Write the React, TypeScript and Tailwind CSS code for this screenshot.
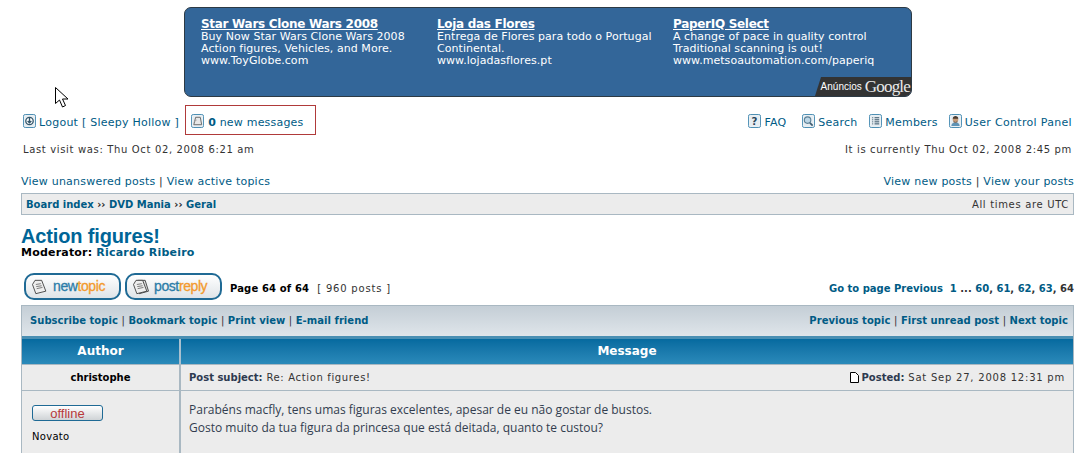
const font = "font-['DejaVu_Sans',Verdana,sans-serif]";

function IconFrame({ children }: { children: React.ReactNode }) {
  return (
    <svg width="13" height="14" viewBox="0 0 14 15" className="shrink-0">
      <rect x="0.5" y="0.5" width="13" height="14" rx="2" fill="#cfdde6" stroke="#3a84ad" />
      <rect x="1.5" y="1.5" width="11" height="12" rx="1" fill="#e6edf2" stroke="#ffffff" strokeWidth="0.5" />
      {children}
    </svg>
  );
}

function LogoutIcon() {
  return (
    <IconFrame>
      <circle cx="7" cy="7.5" r="4" fill="#fff" stroke="#33566b" strokeWidth="1.4" />
      <path d="M7 4v5M5 7.5l2 2 2-2" fill="none" stroke="#33566b" strokeWidth="1.4" />
    </IconFrame>
  );
}

function MessageIcon() {
  return (
    <IconFrame>
      <path d="M5 3.500h5l1.500 8H3z" fill="#e8e8e8" stroke="#666" />
      <path d="M3 8.500l3-2" stroke="#999" />
    </IconFrame>
  );
}

function FaqIcon() {
  return (
    <IconFrame>
      <text x="7" y="11.500" textAnchor="middle" fontSize="11" fontWeight="700" fontFamily="'DejaVu Sans'" fill="#27465a">?</text>
    </IconFrame>
  );
}

function SearchIcon() {
  return (
    <IconFrame>
      <circle cx="6" cy="6.500" r="3.500" fill="#bcd6e6" stroke="#5b7f95" strokeWidth="1.2" />
      <path d="M8.500 9.500l3 3" stroke="#3f5d70" strokeWidth="1.800" />
    </IconFrame>
  );
}

function MembersIcon() {
  return (
    <IconFrame>
      <path d="M3.500 4h1M6 4h5M3.500 6.200h1M6 6.200h5M3.500 8.400h1M6 8.400h5M3.500 10.600h1M6 10.600h5" stroke="#27465a" />
    </IconFrame>
  );
}

function UcpIcon() {
  return (
    <IconFrame>
      <path d="M2.500 13c0-3 2-4 4.500-4s4.500 1 4.500 4z" fill="#5f93b5" />
      <circle cx="7" cy="6" r="3" fill="#c49a78" />
      <path d="M4 5c0-2 1.500-3 3-3s3 1 3 3z" fill="#4a3a2e" />
      <path d="M5 7.500c1 1.500 3 1.500 4 0v1.500H5z" fill="#4a3a2e" />
    </IconFrame>
  );
}

function NavLink({ icon, label, className }: { icon: React.ReactNode; label: React.ReactNode; className?: string }) {
  return (
    <span className={`mt-[6px] flex items-start gap-[3px] leading-[14px] ${className ?? ""}`}>
      <span className="-mt-[2px]">{icon}</span>
      <span>{label}</span>
    </span>
  );
}

function DocIcon({ double }: { double?: boolean }) {
  return (
    <svg width="20" height="20" viewBox="0 0 24 22" className="shrink-0">
      {double && <path d="M8 3h9l4 13-11 3z" fill="#ddd" stroke="#333" />}
      <path d="M6 3h8l5 13-12 3L3 8z" fill="#eee" stroke="#333" />
      <path d="M7 8l6-1M7.500 10.500l6.500-1M8 13l7-1.500" stroke="#666" />
    </svg>
  );
}

function PostButton({ first, second, double, width }: { first: string; second: string; double?: boolean; width: string }) {
  return (
    <div className={`${width} flex h-[27px] items-center gap-[3px] rounded-[10px] border-2 border-[#1f6a95] bg-gradient-to-b from-white to-[#dfe4e8] pl-[4px]`}>
      <DocIcon double={double} />
      <span className="font-['Liberation_Sans',Arial,sans-serif] text-[14px] tracking-[-0.4px] [-webkit-text-stroke:0.3px]">
        <span className="text-[#2b7ca8]">{first}</span>
        <span className="text-[#f39a2d]">{second}</span>
      </span>
    </div>
  );
}

function AdColumn({ title, lines }: { title: string; lines: string[] }) {
  return (
    <div className="w-[236px] text-[11px] leading-[12px] tracking-[0.05px] text-white">
      <div className="text-[12px] leading-[13px] font-bold tracking-[-0.3px] underline">{title}</div>
      {lines.map((line) => (
        <div key={line}>{line}</div>
      ))}
    </div>
  );
}

export default function App() {
  return (
    <div className={`${font} relative h-[453px] w-[1089px] overflow-hidden bg-white text-[11px] text-[#005b85]`}>
      {/* ad banner */}
      <div className="relative mt-[7px] ml-[184px] flex h-[90px] w-[728px] rounded-[7px] border border-[#2d3a44] bg-[#336699] pt-[10px] pl-[16px]">
        <AdColumn
          title="Star Wars Clone Wars 2008"
          lines={["Buy Now Star Wars Clone Wars 2008", "Action figures, Vehicles, and More.", "www.ToyGlobe.com"]}
        />
        <AdColumn
          title="Loja das Flores"
          lines={["Entrega de Flores para todo o Portugal", "Continental.", "www.lojadasflores.pt"]}
        />
        <AdColumn
          title="PaperIQ Select"
          lines={["A change of pace in quality control", "Traditional scanning is out!", "www.metsoautomation.com/paperiq"]}
        />
        <div className="absolute right-0 bottom-0 flex h-[19px] w-[96px] items-center justify-end gap-[3px] rounded-br-[6px] bg-[#333333] pr-[1px] [clip-path:polygon(6px_0,100%_0,100%_100%,0_100%)]">
          <span className="font-['Liberation_Sans',Arial,sans-serif] text-[10px] text-white">Anúncios</span>
          <span className="font-['Liberation_Serif',serif] text-[17px] leading-[16px] tracking-[-0.8px] text-[#e8e8e8]">Google</span>
        </div>
      </div>

      {/* top nav */}
      <div className="mt-[8px] mr-[17px] ml-[23px] flex h-[30px] items-center justify-between tracking-[0.2px]">
        <div className="flex items-center">
          <NavLink icon={<LogoutIcon />} label="Logout [ Sleepy Hollow ]" className="tracking-[0.25px]" />
          <div className="ml-[6px] flex h-[30px] w-[131px] items-center border border-[#b03a3a] pl-[5px]">
            <NavLink
              icon={<MessageIcon />}
              label={
                <span className="ml-[1px]">
                  <b>0</b> new messages
                </span>
              }
            />
          </div>
        </div>
        <div className="flex items-center">
          <NavLink icon={<FaqIcon />} label="FAQ" className="mr-[16px]" />
          <NavLink icon={<SearchIcon />} label="Search" className="mr-[12px]" />
          <NavLink icon={<MembersIcon />} label="Members" className="mr-[11px]" />
          <NavLink icon={<UcpIcon />} label="User Control Panel" className="tracking-[0.32px]" />
        </div>
      </div>

      {/* visit times */}
      <div className="mt-[8px] mr-[17px] ml-[23px] flex justify-between text-[10px] leading-[14px] tracking-[0.65px] text-[#333333]">
        <span>Last visit was: Thu Oct 02, 2008 6:21 am</span>
        <span>It is currently Thu Oct 02, 2008 2:45 pm</span>
      </div>

      <div className="mt-[18px] mr-[15px] ml-[21px] flex justify-between leading-[14px] tracking-[0.22px]">
        <span>
          View unanswered posts <span className="text-[#333]">|</span> View active topics
        </span>
        <span>
          View new posts <span className="text-[#333]">|</span> View your posts
        </span>
      </div>

      {/* breadcrumbs */}
      <div className="mt-[4px] mr-[15px] ml-[21px] flex h-[22px] items-center justify-between border border-[#a9b8c2] bg-[#ececec] px-[4px] text-[10px]">
        <span className="font-bold">
          Board index <span className="text-[#222]">››</span> DVD Mania <span className="text-[#222]">››</span> Geral
        </span>
        <span className="tracking-[0.67px] text-[#333]">All times are UTC</span>
      </div>

      {/* title */}
      <div className="mt-[11px] ml-[21px] font-['Liberation_Sans',Arial,sans-serif] text-[20px] leading-[20px] font-bold tracking-[-0.15px] text-[#006597]">Action figures!</div>
      <div className="ml-[21px] text-[11px] leading-[13px] font-bold tracking-[0.2px] text-black">
        Moderator: <span className="text-[#005b85]">Ricardo Ribeiro</span>
      </div>

      {/* buttons & pagination */}
      <div className="mt-[14px] mr-[15px] ml-[24px] flex h-[27px] items-center justify-between">
        <div className="flex items-center">
          <PostButton first="new" second="topic" width="w-[97px]" />
          <div className="ml-[4px]">
            <PostButton first="post" second="reply" double width="w-[97px]" />
          </div>
          <span className="mt-[4px] ml-[8px] text-[10px] font-bold tracking-[0.15px] text-black">Page 64 of 64</span>
          <span className="mt-[4px] ml-[8px] text-[10px] tracking-[0.8px] text-[#333]">[ 960 posts ]</span>
        </div>
        <span className="mt-[4px] text-[10px] font-bold">
          Go to page Previous&nbsp; 1 <span className="text-[#333]">...</span> 60<span className="text-[#333]">,</span> 61<span className="text-[#333]">,</span> 62<span className="text-[#333]">,</span> 63<span className="text-[#333]">,</span> <span className="text-[#333]">64</span>
        </span>
      </div>

      {/* topic table */}
      <div className="mt-[5px] mr-[15px] ml-[21px] border-x border-[#a9b8c2]">
        <div className="flex h-[31px] items-center justify-between border-t border-[#a9b8c2] bg-gradient-to-b from-[#c4ced6] to-[#dfe5ea] pr-[5px] pb-[2px] pl-[8px] text-[10px] font-bold tracking-[0.04px]">
          <span>
            Subscribe topic <span className="font-normal text-[#333]">|</span> Bookmark topic <span className="font-normal text-[#333]">|</span> Print view <span className="font-normal text-[#333]">|</span> E-mail friend
          </span>
          <span>
            Previous topic <span className="font-normal text-[#333]">|</span> First unread post <span className="font-normal text-[#333]">|</span> Next topic
          </span>
        </div>
        <div className="grid h-[28px] grid-cols-[159px_1fr] border-t-[3px] border-[#4a8fb3] bg-gradient-to-b from-[#056a9f] to-[#2a8aba] text-[12px] font-bold text-white">
          <div className="flex items-center justify-center border-r-2 border-[#a9c0cf] pb-[2px]">Author</div>
          <div className="flex items-center justify-center pb-[2px]">Message</div>
        </div>
        <div className="grid h-[27px] grid-cols-[159px_1fr] border-y border-[#a9b8c2] bg-[#ececec] text-[10px] text-[#333]">
          <div className="flex items-center justify-center border-r-2 border-[#a9b8c2] font-bold text-black">christophe</div>
          <div className="flex items-center justify-between pr-[8px] pl-[8px] tracking-[0.65px]">
            <span>
              <b className="tracking-normal text-[#2d3a50]">Post subject:</b> Re: Action figures!
            </span>
            <span className="flex items-center gap-[3px]">
              <svg width="9" height="11" viewBox="0 0 9 11" className="shrink-0">
                <path d="M0.500 0.500h5l3 3v7h-8z" fill="#fff" stroke="#000" />
              </svg>
              <span className="tracking-[0.77px]">
                <b className="tracking-normal text-[#2d3a50]">Posted:</b> Sat Sep 27, 2008 12:31 pm
              </span>
            </span>
          </div>
        </div>
        <div className="grid h-[70px] grid-cols-[159px_1fr] bg-[#ececec]">
          <div className="border-r-2 border-[#a9b8c2] pt-[14px] pl-[10px] text-[10px] text-black">
            <div className="flex h-[16px] w-[71px] items-center justify-center rounded-[3px] border border-[#1f6a95] bg-gradient-to-b from-white to-[#cfd3d6] font-['Liberation_Sans',Arial,sans-serif] text-[13px] leading-none text-[#b83a3a]">
              offline
            </div>
            <div className="mt-[8px] tracking-[0.3px]">Novato</div>
          </div>
          <div className="pt-[10px] pl-[8px] font-['Open_Sans','DejaVu_Sans',sans-serif] text-[12px] leading-[18px] text-[#323d4f]">
            <div>Parabéns macfly, tens umas figuras excelentes, apesar de eu não gostar de bustos.</div>
            <div>Gosto muito da tua figura da princesa que está deitada, quanto te custou?</div>
          </div>
        </div>
      </div>

      {/* mouse pointer from the capture */}
      <svg width="14" height="22" viewBox="0 0 14 22" className="absolute top-[87px] left-[55px]">
        <path d="M0.500 0.500v16l4-3.500 3 7 3-1.500-3-6.500h5.500z" fill="#fff" stroke="#000" />
      </svg>
    </div>
  );
}
